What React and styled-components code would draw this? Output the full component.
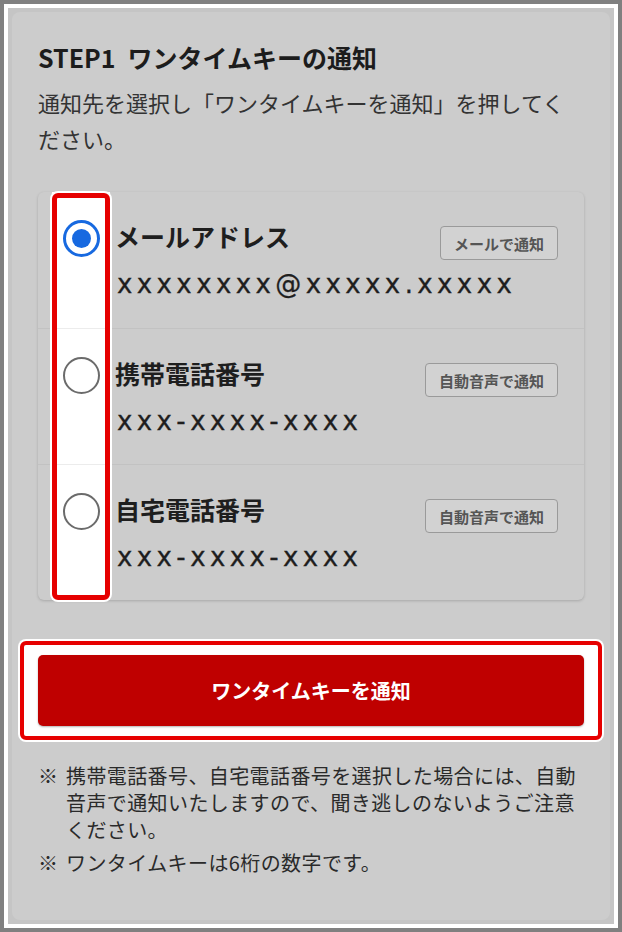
import React, { useState } from "react";
import styled, { createGlobalStyle } from "styled-components";

const GlobalStyle = createGlobalStyle`
  html, body {
    margin: 0;
    padding: 0;
  }
  body {
    font-family: "Noto Sans CJK JP", "Noto Sans", sans-serif;
    color: #222;
  }
`;

const Frame = styled.div`
  width: 622px;
  height: 932px;
  box-sizing: border-box;
  border: 4px solid #808080;
`;

const Screen = styled.div`
  height: 100%;
  box-sizing: border-box;
  border: 4px solid #fff;
  background: #c5c5c5;
  padding: 4px;
`;

const Panel = styled.section`
  height: 100%;
  box-sizing: border-box;
  background: #cccccc;
  border-radius: 8px;
  padding: 29px 26px 0;
  display: flex;
  flex-direction: column;
`;

const Title = styled.h2`
  margin: 0;
  font-size: 25px;
  line-height: 32px;
  font-weight: 700;
  color: #1c1c1c;

  span {
    margin-right: 12px;
  }
`;

const Lead = styled.p`
  margin: 11px 0 0;
  font-size: 22px;
  line-height: 36px;
  color: #333;
`;

const Card = styled.div`
  position: relative;
  margin-top: 36px;
  background: #cccccc;
  border-radius: 6px;
  box-shadow: 0 1px 3px rgba(0, 0, 0, 0.18);
`;

const Row = styled.label`
  display: grid;
  grid-template-columns: 58px 1fr;
  padding-left: 14px;
  height: 136px;
  box-sizing: border-box;
  cursor: pointer;

  & + & {
    border-top: 1px solid #c2c2c2;
  }
`;

const RadioCell = styled.div`
  background: #fff;
  display: flex;
  justify-content: center;
  padding-top: 28px;

  ${Row} + ${Row} & {
    margin-top: -1px;
    border-top: 1px solid #ececec;
  }
`;

const Radio = styled.span`
  width: 37px;
  height: 37px;
  box-sizing: border-box;
  border-radius: 50%;
  border: ${(p) => (p.$checked ? "3px solid #1769e0" : "2.5px solid #6b6b6b")};
  background: #fff;
  display: flex;
  align-items: center;
  justify-content: center;

  &::after {
    content: "";
    width: 19px;
    height: 19px;
    border-radius: 50%;
    background: #1769e0;
    display: ${(p) => (p.$checked ? "block" : "none")};
  }
`;

const Content = styled.div`
  padding: 26px 26px 0 5px;
`;

const Head = styled.div`
  display: flex;
  justify-content: space-between;
  align-items: flex-start;
`;

const Label = styled.div`
  font-size: 25px;
  line-height: 36px;
  font-weight: 700;
  color: #1e1e1e;
`;

const SmallButton = styled.button`
  margin-top: 8px;
  height: 34px;
  padding: 0 13px;
  border: 1px solid #9a9a9a;
  border-radius: 4px;
  background: #d2d2d2;
  font-family: "Noto Sans CJK JP", sans-serif;
  font-size: 15px;
  font-weight: 700;
  color: #555;
  cursor: pointer;
`;

const Value = styled.div`
  margin-top: 6px;
  margin-left: 2px;
  font-family: "DejaVu Sans", sans-serif;
  font-size: 26px;
  line-height: 36px;
  letter-spacing: 4.4px;
  color: #1e1e1e;
  -webkit-text-stroke: 0.3px #1e1e1e;
`;

const Highlight = styled.div`
  position: absolute;
  top: 1px;
  bottom: 0;
  left: 14px;
  width: 58px;
  box-sizing: border-box;
  border: 5px solid #e60000;
  border-radius: 6px;
  box-shadow: 0 0 0 2px #fff;
  pointer-events: none;
`;

const ButtonFrame = styled.div`
  margin: 41px -18px 0;
  padding: 10px 14px;
  background: #fff;
  border: 4px solid #e60000;
  border-radius: 6px;
  box-shadow: 0 0 0 2px #fff;
`;

const MainButton = styled.button`
  display: block;
  width: 100%;
  height: 71px;
  border: none;
  border-radius: 5px;
  background: #bf0000;
  color: #fff;
  font-family: "Noto Sans CJK JP", sans-serif;
  font-size: 20px;
  font-weight: 700;
  cursor: pointer;
  box-shadow: 0 1px 2px rgba(0, 0, 0, 0.3);
`;

const Notes = styled.ul`
  list-style: none;
  margin: 22px 0 0;
  padding: 0;
  display: flex;
  flex-direction: column;
  gap: 6px;
`;

const Note = styled.li`
  display: flex;
  font-size: 20px;
  line-height: 27px;
  letter-spacing: 0.4px;
  color: #2a2a2a;

  &::before {
    content: "※";
    flex: 0 0 28px;
  }
`;

const targets = [
  { id: "mail", label: "メールアドレス", value: "xxxxxxxx@xxxxx.xxxxx", action: "メールで通知" },
  { id: "mobile", label: "携帯電話番号", value: "xxx-xxxx-xxxx", action: "自動音声で通知" },
  { id: "home", label: "自宅電話番号", value: "xxx-xxxx-xxxx", action: "自動音声で通知" },
];

const App = () => {
  const [selected, setSelected] = useState("mail");

  return (
    <Frame>
      <GlobalStyle />
      <Screen>
        <Panel>
          <Title>
            <span>STEP1</span>ワンタイムキーの通知
          </Title>
          <Lead>通知先を選択し「ワンタイムキーを通知」を押してください。</Lead>

          <Card>
            {targets.map((t) => (
              <Row key={t.id} onClick={() => setSelected(t.id)}>
                <RadioCell>
                  <Radio $checked={selected === t.id} />
                </RadioCell>
                <Content>
                  <Head>
                    <Label>{t.label}</Label>
                    <SmallButton type="button">{t.action}</SmallButton>
                  </Head>
                  <Value>{t.value}</Value>
                </Content>
              </Row>
            ))}
            <Highlight />
          </Card>

          <ButtonFrame>
            <MainButton type="button">ワンタイムキーを通知</MainButton>
          </ButtonFrame>

          <Notes>
            <Note>
              携帯電話番号、自宅電話番号を選択した場合には、自動音声で通知いたしますので、聞き逃しのないようご注意ください。
            </Note>
            <Note>ワンタイムキーは6桁の数字です。</Note>
          </Notes>
        </Panel>
      </Screen>
    </Frame>
  );
};

export default App;
